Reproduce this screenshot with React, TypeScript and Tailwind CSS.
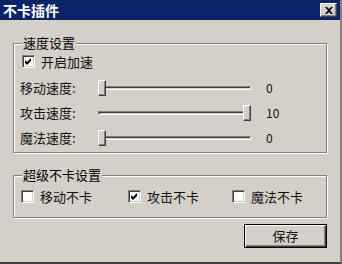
import type { ReactNode } from 'react';

const FONT = "font-['Noto_Sans_CJK_SC','Noto_Sans',sans-serif]";

function CheckMark() {
  return (
    <svg width="7" height="7" viewBox="0 0 7 7" className="block">
      <path d="M0 2 L2 4 L6 0 L6 3 L2 7 L0 5 Z" fill="#000" />
    </svg>
  );
}

function Checkbox({ checked }: { checked?: boolean }) {
  return (
    <div
      className="
        w-[13px] h-[13px] shrink-0 flex items-center justify-center bg-white
        border border-t-[#808080] border-l-[#808080] border-b-white border-r-white
        shadow-[inset_1px_1px_0_#404040,inset_-1px_-1px_0_#d4d0c8]
      "
    >
      {checked && <CheckMark />}
    </div>
  );
}

function GroupBox({ title, className, children }: { title: string; className?: string; children: ReactNode }) {
  return (
    <div
      className={`
        relative mx-[13px] w-[314px] border border-[#808080]
        shadow-[1px_1px_0_#fff,inset_1px_1px_0_#fff] ${className ?? ''}
      `}
    >
      {/* legend sits over the etched border */}
      <span className="absolute -top-[10px] left-[8px] px-[1px] bg-[#d4d0c8] text-[13px] leading-[18px] text-black">
        {title}
      </span>
      {children}
    </div>
  );
}

function Slider({ label, value, max }: { label: string; value: number; max: number }) {
  const pos = (value / max) * (153 - 8);
  return (
    <div className="h-[25px] flex items-center">
      <span className="w-[78px] text-[13px] text-[#111]">{label}</span>
      <div className="relative w-[153px] h-[16px] flex items-center">
        <div
          className="
            w-full h-[4px] border border-t-[#808080] border-l-[#808080] border-b-white border-r-white
            shadow-[inset_1px_1px_0_#404040]
          "
        />
        <div
          className="
            absolute top-0 w-[8px] h-[16px] bg-[#d4d0c8]
            border border-t-white border-l-white border-b-[#404040] border-r-[#404040]
            shadow-[inset_-1px_-1px_0_#808080]
          "
          style={{ left: pos }}
        />
      </div>
      <span className="ml-[15px] text-[12px] text-[#111]">{value}</span>
    </div>
  );
}

export default function App() {
  return (
    <div
      className={`
        ${FONT} w-[342px] h-[264px] bg-[#d4d0c8] flex flex-col
        border-r-2 border-b-2 border-r-[#808080] border-b-[#404040]
      `}
    >
      {/* Title bar */}
      <div className="h-[20px] shrink-0 bg-[#0a246a] flex items-center justify-between pl-[3px] pr-[3px]">
        <span className="text-white font-bold text-[14px] leading-none">不卡插件</span>
        <div
          className="
            w-[17px] h-[14px] bg-[#d4d0c8] flex items-center justify-center
            border border-t-white border-l-white border-b-[#404040] border-r-[#404040]
            shadow-[inset_-1px_-1px_0_#808080]
          "
        >
          <svg width="8" height="7" viewBox="0 0 8 7">
            <path d="M0 0 L2 0 L4 2 L6 0 L8 0 L5 3.5 L8 7 L6 7 L4 5 L2 7 L0 7 L3 3.5 Z" fill="#000" />
          </svg>
        </div>
      </div>

      {/* 速度设置 */}
      <GroupBox title="速度设置" className="mt-[23px] pl-[6px] pt-[11px] pb-[2px]">
        <div className="flex items-center gap-[6px] ml-[2px] h-[13px]">
          <Checkbox checked />
          <span className="text-[13px] text-[#111]">开启加速</span>
        </div>
        <div className="mt-[7px]">
          <Slider label="移动速度:" value={0} max={10} />
          <Slider label="攻击速度:" value={10} max={10} />
          <Slider label="魔法速度:" value={0} max={10} />
        </div>
      </GroupBox>

      {/* 超级不卡设置 */}
      <GroupBox title="超级不卡设置" className="mt-[22px] pl-[7px] py-[14px]">
        <div className="flex h-[13px] items-center">
          <div className="w-[107px] flex items-center gap-[6px]">
            <Checkbox />
            <span className="text-[13px] text-[#111]">移动不卡</span>
          </div>
          <div className="w-[104px] flex items-center gap-[6px]">
            <Checkbox checked />
            <span className="text-[13px] text-[#111]">攻击不卡</span>
          </div>
          <div className="flex items-center gap-[6px]">
            <Checkbox />
            <span className="text-[13px] text-[#111]">魔法不卡</span>
          </div>
        </div>
      </GroupBox>

      {/* Save */}
      <div className="flex justify-end mt-[6px] pr-[13px]">
        <button
          className="
            w-[83px] h-[24px] border border-black bg-[#d4d0c8] text-[13px] text-[#111]
            shadow-[inset_1px_1px_0_#fff,inset_-1px_-1px_0_#404040,inset_-2px_-2px_0_#808080]
          "
        >
          保存
        </button>
      </div>
    </div>
  );
}
